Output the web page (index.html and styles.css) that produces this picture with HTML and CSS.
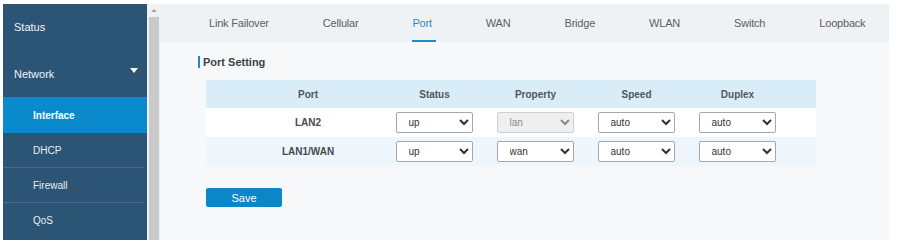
FILE: index.html
```html
<!DOCTYPE html>
<html>
<head>
<meta charset="utf-8">
<link rel="stylesheet" href="styles.css">
</head>
<body>
<div class="frame">
  <nav class="sidebar">
    <div class="nav-item">Status</div>
    <div class="nav-item nav-group"><span>Network</span><span class="caret"></span></div>
    <div class="sub-item active">Interface</div>
    <div class="sub-item sep">DHCP</div>
    <div class="sub-item sep">Firewall</div>
    <div class="sub-item">QoS</div>
  </nav>
  <div class="scrollbar">
    <span class="scroll-arrow"></span>
    <div class="scroll-thumb"></div>
  </div>
  <main class="main">
    <div class="tabs">
      <div class="tab">Link Failover</div>
      <div class="tab">Cellular</div>
      <div class="tab active">Port</div>
      <div class="tab">WAN</div>
      <div class="tab">Bridge</div>
      <div class="tab">WLAN</div>
      <div class="tab">Switch</div>
      <div class="tab">Loopback</div>
    </div>
    <section class="content">
      <h2 class="section-title">Port Setting</h2>
      <div class="table">
        <div class="row head">
          <div class="cell port">Port</div>
          <div class="cell">Status</div>
          <div class="cell">Property</div>
          <div class="cell">Speed</div>
          <div class="cell">Duplex</div>
          <div class="cell"></div>
        </div>
        <div class="row odd">
          <div class="cell port">LAN2</div>
          <div class="cell"><select class="sel"><option>up</option><option>down</option></select></div>
          <div class="cell"><select class="sel" disabled><option>lan</option><option>wan</option></select></div>
          <div class="cell"><select class="sel"><option>auto</option></select></div>
          <div class="cell"><select class="sel"><option>auto</option></select></div>
          <div class="cell"></div>
        </div>
        <div class="row even">
          <div class="cell port">LAN1/WAN</div>
          <div class="cell"><select class="sel"><option>up</option><option>down</option></select></div>
          <div class="cell"><select class="sel"><option>wan</option><option>lan</option></select></div>
          <div class="cell"><select class="sel"><option>auto</option></select></div>
          <div class="cell"><select class="sel"><option>auto</option></select></div>
          <div class="cell"></div>
        </div>
      </div>
      <button class="btn-save">Save</button>
    </section>
  </main>
</div>
</body>
</html>
```
FILE: styles.css
```css
html, body {
  margin: 0;
  padding: 0;
  background: #ffffff;
}
body {
  font-family: "Liberation Sans", Arial, sans-serif;
  width: 900px;
  height: 247px;
  overflow: hidden;
}
.frame {
  display: flex;
  padding: 4px 0 0 3px;
  height: 236px;
}
.sidebar {
  width: 144px;
  height: 236px;
  background: #2c5475;
  color: #eef3f7;
  display: flex;
  flex-direction: column;
}
.nav-item {
  height: 46px;
  display: flex;
  align-items: center;
  padding-left: 11px;
  font-size: 11px;
}
.nav-group {
  height: 47px;
  justify-content: space-between;
  padding-right: 9px;
}
.caret {
  width: 0;
  height: 0;
  border-left: 4px solid transparent;
  border-right: 4px solid transparent;
  border-top: 5px solid #ffffff;
  margin-top: -6px;
}
.sub-item {
  height: 35px;
  display: flex;
  align-items: center;
  padding-left: 30px;
  font-size: 10px;
  color: #e8eef3;
}
.sub-item.active {
  height: 36px;
  background: #0a89cc;
  color: #ffffff;
  font-weight: bold;
}
.sub-item.sep {
  height: 34px;
  border-bottom: 1px solid #47698a;
  margin-right: 3px;
}
.scrollbar {
  width: 13px;
  height: 236px;
  background: #f1f1f1;
  display: flex;
  flex-direction: column;
  align-items: center;
}
.scroll-arrow {
  width: 0;
  height: 0;
  border-left: 3px solid transparent;
  border-right: 3px solid transparent;
  border-bottom: 3px solid #a3a3a3;
  margin-top: 5px;
}
.scroll-thumb {
  width: 10px;
  flex: 1;
  margin-top: 5px;
  background: #c9c9c9;
}
.main {
  width: 729px;
  height: 236px;
  background: #f6f8f9;
  display: flex;
  flex-direction: column;
}
.tabs {
  height: 38px;
  background: #eff2f4;
  display: flex;
  padding-left: 22px;
  overflow: hidden;
  flex-shrink: 0;
}
.tab {
  padding: 0 27px;
  font-size: 11px;
  color: #5a6065;
  display: flex;
  align-items: center;
  position: relative;
  letter-spacing: -0.2px;
  white-space: nowrap;
  flex-shrink: 0;
}
.tab.active {
  color: #1f8cc8;
}
.tab.active::after {
  content: "";
  position: absolute;
  left: 27px;
  right: 23px;
  bottom: 0;
  height: 2px;
  background: #1f8cc8;
}
.content {
  padding: 14px 0 0 38px;
  display: flex;
  flex-direction: column;
  align-items: flex-start;
}
.section-title {
  margin: 0;
  font-size: 11px;
  font-weight: bold;
  color: #3c4247;
  line-height: 12px;
  border-left: 2px solid #1f8cc8;
  padding-left: 3px;
}
.table {
  margin: 12px 0 0 8px;
  width: 610px;
}
.row {
  display: grid;
  grid-template-columns: 178px 101px 101px 101px 101px 28px;
  height: 29px;
}
.row.head {
  height: 28px;
  background: #d9edf8;
}
.row.odd {
  background: #ffffff;
}
.row.even {
  background: #eef6fb;
}
.cell {
  display: flex;
  align-items: center;
  justify-content: center;
  font-size: 10px;
  font-weight: bold;
  color: #454b50;
}
.row.head .cell {
  color: #51575c;
}
.cell.port {
  padding-left: 26px;
}
.sel {
  width: 77px;
  height: 21px;
  font-family: "Liberation Sans", Arial, sans-serif;
  font-size: 10px;
  color: #333333;
  background-color: #ffffff;
  border: 1px solid #a7a7a7;
  border-radius: 2px;
  padding: 0 0 0 8px;
  margin-left: -1px;
}
.sel:disabled {
  background-color: #efefef;
  color: #8a8a8a;
  border-color: #cfcfcf;
  opacity: 1;
}
.btn-save {
  margin: 22px 0 0 8px;
  width: 76px;
  height: 19px;
  background: #0a86c9;
  color: #ffffff;
  border: none;
  border-radius: 2px;
  font-family: "Liberation Sans", Arial, sans-serif;
  font-size: 11px;
  padding: 0;
}
```
